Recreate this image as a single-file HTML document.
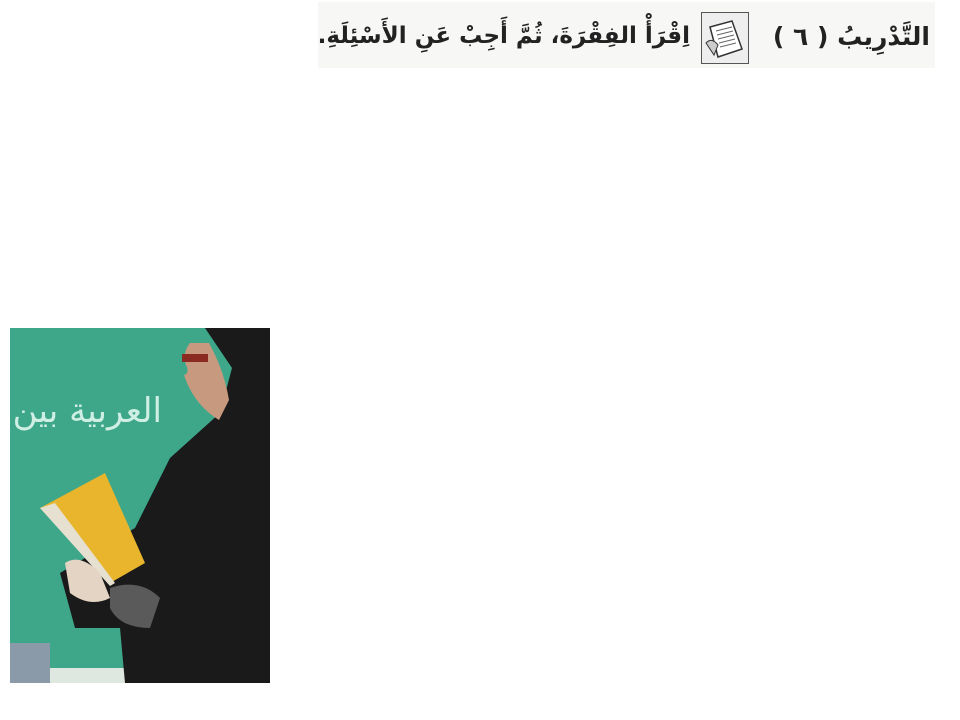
<!DOCTYPE html>
<html><head><meta charset="utf-8"><style>
body{margin:0;width:960px;height:720px;background:#fff;position:relative;overflow:hidden}
.hdr{position:absolute;left:318px;top:2px;width:617px;height:66px;background:#f7f7f5}
.t{position:absolute;top:22px;font:bold 25px "DejaVu Sans","Noto Sans CJK SC",sans-serif;color:#222;direction:rtl;white-space:nowrap}
.ic{position:absolute;left:701px;top:12px;width:46px;height:50px;border:1px solid #555;background:#eee}
</style></head><body>
<div class="hdr"></div>
<div class="t" style="right:30px">التَّدْرِيبُ ( ٦ )</div>
<div class="ic"><svg width="46" height="50"><path d="M8 14 L30 8 L40 36 L16 44 Z" fill="#fff" stroke="#333" stroke-width="1.5"/><path d="M14 18l16-4M15 22l16-4M16 26l16-4M17 30l16-4M18 34l16-4" stroke="#666"/><path d="M4 30 q6-6 12 2 l-4 10z" fill="#ccc" stroke="#333"/></svg></div>
<div class="t" style="right:270px;font-size:23px;top:23px">اِقْرَأْ الفِقْرَةَ، ثُمَّ أَجِبْ عَنِ الأَسْئِلَةِ.</div>
<svg style="position:absolute;left:10px;top:328px" width="260" height="355" viewBox="0 0 260 355">
<rect width="260" height="355" fill="#3ea78a"/>
<rect x="0" y="315" width="40" height="40" fill="#8a9aa8"/>
<rect x="40" y="340" width="90" height="15" fill="#dfe8e0"/>
<path d="M180 0 L260 0 L260 355 L115 355 L110 300 L65 300 L50 245 L125 200 L160 130 L210 85 L222 40 L195 0 Z" fill="#1a1a1a"/>
<path d="M180 15 q-8 10 -4 22 q4 8 -2 10 q10 30 35 45 l10 -20 q-5 -30 -20 -57 z" fill="#c79a80"/>
<rect x="172" y="26" width="26" height="8" fill="#8a2a20"/>
<path d="M30 180 L95 145 L135 235 L100 255 Z" fill="#e8b52c"/>
<path d="M30 180 L45 175 L105 255 L100 258 Z" fill="#e6e0d0"/>
<path d="M55 235 q15 -10 35 10 l10 25 q-20 10 -40 -5 z" fill="#e4d4c4"/>
<path d="M100 260 q30 -10 50 10 l-10 30 q-30 0 -40 -20z" fill="#5a5a5a"/>
<text x="152" y="94" font-family="DejaVu Sans" font-size="34" fill="#cfeee4" text-anchor="start" direction="rtl">العربية بين</text>
</svg>
</body></html>
